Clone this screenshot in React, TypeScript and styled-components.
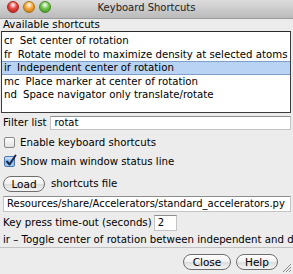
import React from 'react';
import styled, { createGlobalStyle } from 'styled-components';

const GlobalStyle = createGlobalStyle`
  html, body {
    margin: 0;
    padding: 0;
    background: #ececec;
  }
  body {
    font-family: "DejaVu Sans", "Liberation Sans", sans-serif;
    font-size: 10.2px;
    color: #000;
  }
`;

const Window = styled.div`
  width: 293px;
  height: 274px;
  overflow: hidden;
  background: #ececec;
  display: flex;
  flex-direction: column;
  position: relative;
`;

const TitleBar = styled.div`
  height: 19px;
  box-sizing: border-box;
  padding: 0 0 4px 7px;
  display: flex;
  align-items: center;
  background: linear-gradient(#dcdcdc, #bababa);
  border-bottom: 1px solid #9a9a9a;
  position: relative;
`;

const Lights = styled.div`
  display: flex;
  gap: 4px;
`;

const Light = styled.span<{ $c: string; $d: string }>`
  width: 12px;
  height: 12px;
  border-radius: 50%;
  box-sizing: border-box;
  border: 1px solid ${({ $d }) => $d};
  background: radial-gradient(circle at 50% 30%, #fff 0, ${({ $c }) => $c} 45%, ${({ $d }) => $d} 100%);
`;

const Title = styled.div`
  position: absolute;
  left: 0;
  right: 0;
  top: 2px;
  text-align: center;
  font-size: 10px;
  line-height: 12px;
  color: #222;
`;

const Body = styled.div`
  display: flex;
  flex-direction: column;
  padding: 0 2px 0 1px;
`;

const Label = styled.div`
  padding-left: 2px;
  line-height: 12px;
  height: 12px;
  white-space: nowrap;
`;

const ListBox = styled.div`
  height: 82px;
  box-sizing: border-box;
  border: 1px solid #3c3c3c;
  border-top-color: #2a2a2a;
  background: #fff;
  padding-top: 2px;
`;

const ListRow = styled.div<{ $selected?: boolean }>`
  height: 13.5px;
  line-height: 13.5px;
  padding-left: 2px;
  white-space: nowrap;
  overflow: hidden;
  box-sizing: border-box;
  background: ${({ $selected }) => ($selected ? '#b9d3f4' : 'transparent')};
  ${({ $selected }) => $selected && 'border-top: 1px solid #7e9ecb; border-bottom: 1px solid #7e9ecb; line-height: 11.5px;'}
`;

const Code = styled.span`
  margin-right: 6px;
`;

const Row = styled.div<{ $mt?: number; $h?: number }>`
  display: flex;
  align-items: center;
  margin-top: ${({ $mt }) => $mt ?? 0}px;
  height: ${({ $h }) => $h ?? 14}px;
  white-space: nowrap;
`;

const Entry = styled.div<{ $w?: number; $h?: number }>`
  box-sizing: border-box;
  height: ${({ $h }) => $h ?? 14}px;
  ${({ $w }) => ($w ? `width: ${$w}px;` : 'flex: 1;')}
  background: #fff;
  border: 1px solid #c4c4c4;
  border-top-color: #8e8e8e;
  padding-left: 3px;
  font-size: 10px;
  line-height: ${({ $h }) => ($h ?? 14) - 2}px;
  white-space: nowrap;
  overflow: hidden;
`;

const CheckBox = styled.span`
  width: 11px;
  height: 11px;
  margin: 0 5px 0 3px;
  box-sizing: border-box;
  border: 1px solid #8a8a8a;
  border-radius: 2px;
  background: linear-gradient(#fdfdfd, #e2e2e2);
  display: inline-flex;
  position: relative;
`;

const CheckedBox = styled(CheckBox)`
  border-color: #4a76b0;
  background: linear-gradient(#d4e6fb, #7fb0ea 55%, #a9cdf5);
  svg {
    position: absolute;
    left: 0;
    top: -3px;
  }
`;

const PillButton = styled.button<{ $w: number }>`
  width: ${({ $w }) => $w}px;
  height: 16px;
  box-sizing: border-box;
  border: 1px solid #6e6e6e;
  border-radius: 8px;
  background: linear-gradient(#ffffff, #f0f0f0 50%, #dcdcdc 51%, #f4f4f4);
  font-family: "DejaVu Sans", "Liberation Sans", sans-serif;
  font-size: 10.5px;
  line-height: 14px;
  padding: 0;
  color: #000;
`;

const Status = styled.div`
  margin-top: 2px;
  height: 14px;
  line-height: 14px;
  padding-left: 3px;
  white-space: nowrap;
  overflow: hidden;
  border-bottom: 1px solid #c2c2c2;
`;

const ButtonBar = styled.div`
  display: flex;
  justify-content: flex-end;
  gap: 5px;
  margin-top: 6px;
  padding-right: 15px;
`;

const Grip = styled.svg`
  position: absolute;
  right: 1px;
  bottom: 1px;
`;

const shortcuts = [
  ['cr', 'Set center of rotation'],
  ['fr', 'Rotate model to maximize density at selected atoms'],
  ['ir', 'Independent center of rotation'],
  ['mc', 'Place marker at center of rotation'],
  ['nd', 'Space navigator only translate/rotate'],
];

export default function App() {
  return (
    <Window>
      <GlobalStyle />
      <TitleBar>
        <Lights>
          <Light $c="#e4453f" $d="#a5231d" />
          <Light $c="#f3a53a" $d="#b0700f" />
          <Light $c="#70c24a" $d="#3f8a22" />
        </Lights>
        <Title>Keyboard Shortcuts</Title>
      </TitleBar>
      <Body>
        <Label>Available shortcuts</Label>
        <ListBox>
          {shortcuts.map(([code, text]) => (
            <ListRow key={code} $selected={code === 'ir'}>
              <Code>{code}</Code>
              {text}
            </ListRow>
          ))}
        </ListBox>
        <Row $mt={3}>
          <Label>Filter list</Label>
          <Entry style={{ marginLeft: 4 }}>rotat</Entry>
        </Row>
        <Row $mt={3} $h={19}>
          <CheckBox />
          Enable keyboard shortcuts
        </Row>
        <Row $h={19}>
          <CheckedBox>
            <svg width="13" height="13" viewBox="0 0 13 13">
              <path d="M2 7.5 L4.5 10.5 L10.5 1.5" fill="none" stroke="#1b2a4a" strokeWidth="2" strokeLinecap="round" strokeLinejoin="round" />
            </svg>
          </CheckedBox>
          Show main window status line
        </Row>
        <Row $mt={4} $h={17}>
          <PillButton $w={42} style={{ marginLeft: 2 }}>Load</PillButton>
          <span style={{ marginLeft: 6 }}>shortcuts file</span>
        </Row>
        <Row $mt={4} $h={16}>
          <Entry $h={16} style={{ marginLeft: 2 }}>Resources/share/Accelerators/standard_accelerators.py</Entry>
        </Row>
        <Row $mt={3} $h={16}>
          <Label>Key press time-out (seconds)</Label>
          <Entry $w={23} $h={16} style={{ marginLeft: 2 }}>2</Entry>
        </Row>
      </Body>
      <Status>ir – Toggle center of rotation between independent and default</Status>
      <ButtonBar>
        <PillButton $w={48}>Close</PillButton>
        <PillButton $w={42}>Help</PillButton>
      </ButtonBar>
      <Grip width="11" height="11" viewBox="0 0 11 11">
        <path d="M10 2 L2 10 M10 5 L5 10 M10 8 L8 10" stroke="#8a8a8a" strokeWidth="1" />
      </Grip>
    </Window>
  );
}
